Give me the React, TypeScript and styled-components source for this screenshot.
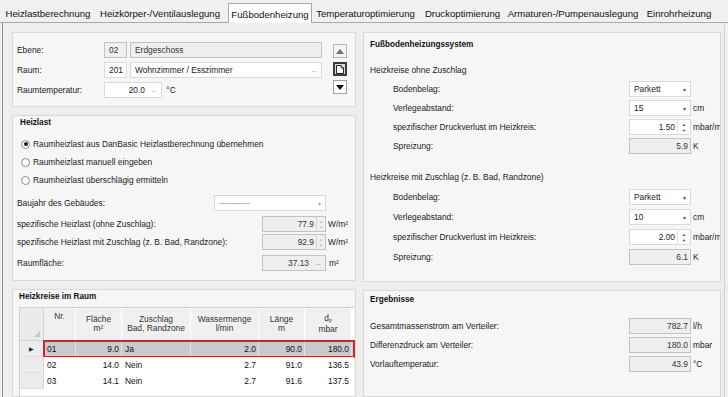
import React from "react";
import styled, { createGlobalStyle, css } from "styled-components";

const GlobalStyle = createGlobalStyle`
  html, body {
    margin: 0;
    padding: 0;
  }
  body {
    width: 728px;
    height: 397px;
    overflow: hidden;
    background: #f0f0f0;
    font-family: "Liberation Sans", Arial, sans-serif;
    font-size: 8.4px;
    color: #1b1b1b;
  }
`;

const Window = styled.div`
  width: 728px;
  height: 397px;
  display: flex;
  flex-direction: column;
  background: #f0f0f0;
`;

const TabStrip = styled.div`
  height: 23px;
  box-sizing: border-box;
  display: flex;
  align-items: flex-end;
  padding-left: 2px;
  border-bottom: 1px solid #a9a9a9;
`;

const Tab = styled.div<{ $w: number; $active?: boolean }>`
  width: ${(p) => p.$w}px;
  height: 18px;
  box-sizing: border-box;
  display: flex;
  align-items: center;
  justify-content: center;
  font-size: 9.6px;
  white-space: nowrap;
  color: #111;
  ${(p) =>
    p.$active &&
    css`
      height: 20px;
      margin: 0 0 -1px 2px;
      padding-top: 1px;
      background: #fff;
      border: 1px solid #a9a9a9;
      border-bottom: none;
    `}
`;

const Content = styled.div`
  flex: 1;
  min-height: 0;
  margin-left: 2px;
  width: 723px;
  box-sizing: border-box;
  border-left: 1px solid #8e8e8e;
  border-right: 1px solid #d2d2d2;
  padding: 9px 3px 0 9px;
  display: flex;
  gap: 7px;
  background: #eeeeee;
`;

const Column = styled.div<{ $w: number }>`
  width: ${(p) => p.$w}px;
  display: flex;
  flex-direction: column;
  gap: 8px;
`;

const Group = styled.div<{ $h?: number }>`
  box-sizing: border-box;
  ${(p) => (p.$h ? `height: ${p.$h}px;` : "flex: 1; min-height: 0;")}
  background: #f6f6f6;
  border: 1px solid #d9d9d9;
  display: flex;
  flex-direction: column;
  overflow: hidden;
`;

const Title = styled.div<{ $indent?: number; $top?: number }>`
  height: 14px;
  line-height: 14px;
  margin: ${(p) => p.$top ?? 0}px 0 0 ${(p) => p.$indent ?? 0}px;
  font-weight: bold;
  font-size: 8.2px;
  color: #111;
`;

const SubTitle = styled.div<{ $top: number }>`
  height: 14px;
  line-height: 14px;
  margin-top: ${(p) => p.$top}px;
`;

const Label = styled.div`
  height: 16px;
  line-height: 16px;
  white-space: nowrap;
`;

/* ---------- fields ---------- */

const Box = styled.div<{ $w?: number; $off?: boolean }>`
  ${(p) => (p.$w ? `width: ${p.$w}px;` : "")}
  height: 16px;
  box-sizing: border-box;
  border: 1px solid ${(p) => (p.$off ? "#c2c2c2" : "#dadada")};
  background: ${(p) => (p.$off ? "#efefef" : "#fff")};
  display: flex;
  align-items: center;
  white-space: nowrap;
  color: ${(p) => (p.$off ? "#333" : "#1b1b1b")};
`;

const BoxText = styled.span<{ $right?: boolean }>`
  flex: 1;
  padding: 0 ${(p) => (p.$right ? "2px" : "3px")} 0 4px;
  text-align: ${(p) => (p.$right ? "right" : "left")};
`;

const Dots = styled.span`
  width: 14px;
  text-align: center;
  color: #999;
  font-size: 8px;
  letter-spacing: -0.5px;
  padding-bottom: 2px;
`;

const Spin = styled.div<{ $w: number; $off?: boolean }>`
  width: ${(p) => p.$w}px;
  align-self: stretch;
  border-left: 1px solid ${(p) => (p.$off ? "#d6d6d6" : "#e2e2e2")};
  display: flex;
  flex-direction: column;
  align-items: center;
  justify-content: center;
  gap: 3px;
  color: ${(p) => (p.$off ? "#bdbdbd" : "#333")};
  font-size: 4px;
  line-height: 3px;
`;

const Arrow = styled.span<{ $off?: boolean }>`
  width: 12px;
  text-align: center;
  font-size: 6px;
  color: ${(p) => (p.$off ? "#aaa" : "#555")};
`;

const Unit = styled.div`
  height: 16px;
  line-height: 16px;
  padding-left: 2px;
  white-space: nowrap;
`;

function TextField({ w, off, right, value, dots }: { w?: number; off?: boolean; right?: boolean; value: string; dots?: boolean }) {
  return (
    <Box $w={w} $off={off}>
      <BoxText $right={right}>{value}</BoxText>
      {dots && <Dots>...</Dots>}
    </Box>
  );
}

function SpinField({ w, off, value, spinW }: { w: number; off?: boolean; value: string; spinW: number }) {
  return (
    <Box $w={w} $off={off}>
      <BoxText $right>{value}</BoxText>
      <Spin $w={spinW} $off={off}>
        <span>▲</span>
        <span>▼</span>
      </Spin>
    </Box>
  );
}

const ComboText = styled(BoxText)<{ $off?: boolean }>`
  color: ${(p) => (p.$off ? "#8a8a8a" : "inherit")};
`;

function Combo({ w, off, value }: { w: number; off?: boolean; value: string }) {
  return (
    <Box $w={w}>
      <ComboText $off={off}>{value}</ComboText>
      <Arrow $off={off}>▾</Arrow>
    </Box>
  );
}

/* ---------- raum group ---------- */

const RaumBody = styled.div`
  display: flex;
  padding: 9px 0 0 4px;
`;

const RaumGrid = styled.div`
  display: grid;
  grid-template-columns: 84px 23px 192px;
  grid-auto-rows: 16px;
  column-gap: 3px;
  row-gap: 4px;
`;

const TempCell = styled.div`
  grid-column: 2 / 4;
  display: flex;
  align-items: center;
`;

const NavColumn = styled.div`
  margin-left: 11px;
  padding-top: 2px;
  display: flex;
  flex-direction: column;
  gap: 4px;
`;

const NavButton = styled.div<{ $kind: "up" | "doc" | "down" }>`
  width: 14px;
  height: 14px;
  box-sizing: border-box;
  display: flex;
  align-items: center;
  justify-content: center;
  ${(p) =>
    p.$kind === "up" &&
    css`
      border: 1px solid #b4b4b4;
      background: #f4f4f4;
    `}
  ${(p) =>
    p.$kind === "doc" &&
    css`
      border: 2px solid #3a3a3a;
      background: #dcdcdc;
    `}
  ${(p) =>
    p.$kind === "down" &&
    css`
      border: 1px solid #a0a0a0;
      background: #fff;
    `}
`;

/* ---------- heizlast group ---------- */

const HeizlastBody = styled.div`
  display: flex;
  flex-direction: column;
  padding: 0 1px 0 4px;
`;

const TableBody = styled(HeizlastBody)`
  flex: 1;
  min-height: 0;
`;

const RadioRow = styled.div<{ $top?: number }>`
  height: 18px;
  display: flex;
  align-items: center;
  margin: ${(p) => p.$top ?? 0}px 0 0 4px;
  gap: 3px;
`;

const RadioDot = styled.span<{ $on?: boolean }>`
  width: 9px;
  height: 9px;
  box-sizing: border-box;
  border-radius: 50%;
  border: 1px solid #8a8a8a;
  background: #fff;
  display: flex;
  align-items: center;
  justify-content: center;
  &::after {
    content: "";
    width: 4px;
    height: 4px;
    border-radius: 50%;
    background: ${(p) => (p.$on ? "#1a1a1a" : "transparent")};
  }
`;

const LastRow = styled.div<{ $top: number }>`
  display: flex;
  align-items: center;
  height: 16px;
  margin-top: ${(p) => p.$top}px;
`;

const Grow = styled.div`
  flex: 1;
`;

const UnitSlot = styled.div<{ $pad?: number }>`
  width: 28px;
  padding-left: ${(p) => p.$pad ?? 0}px;
  box-sizing: border-box;
`;

/* ---------- table ---------- */

const TableWrap = styled.div`
  margin: 3px 0 0 2px;
  width: 334px;
  flex: 1;
  background: #fff;
  border-left: 1px solid #d0d0d0;
  border-top: 1px solid #d0d0d0;
`;

const HeadRow = styled.div`
  display: grid;
  grid-template-columns: 24px 32px 46px 69px 68px 46px 47px;
  height: 33px;
`;

const HeadCell = styled.div<{ $top?: boolean }>`
  box-sizing: border-box;
  background: #f0f0f0;
  border-right: 1px solid #fff;
  border-bottom: 1px solid #d0d0d0;
  display: flex;
  flex-direction: column;
  align-items: center;
  justify-content: ${(p) => (p.$top ? "flex-start" : "center")};
  padding-top: ${(p) => (p.$top ? 4 : 0)}px;
  line-height: 9px;
  text-align: center;
  white-space: nowrap;
  color: #333;
`;

const Sub = styled.sub`
  font-size: 5px;
  vertical-align: -1px;
`;

const Corner = styled.div`
  box-sizing: border-box;
  background: #ebebeb;
  border-right: 1px solid #d6d6d6;
  border-bottom: 1px solid #d0d0d0;
  display: flex;
  align-items: flex-end;
  justify-content: flex-end;
  padding: 0 3px 3px 0;
`;

const DataRow = styled.div`
  display: grid;
  grid-template-columns: 24px 1fr;
  height: 16px;
`;

const RowHead = styled.div`
  box-sizing: border-box;
  background: #ececec;
  border-right: 1px solid #d6d6d6;
  border-bottom: 1px solid #e0e0e0;
  display: flex;
  align-items: center;
  justify-content: center;
  font-size: 6px;
  color: #222;
`;

const Cells = styled.div<{ $sel?: boolean }>`
  display: grid;
  grid-template-columns: 32px 46px 69px 68px 46px 47px;
  background: ${(p) => (p.$sel ? "#cacaca" : "#fff")};
  ${(p) =>
    p.$sel &&
    css`
      outline: 2px solid #c42a31;
      outline-offset: -1px;
    `}
`;

const Cell = styled.div<{ $right?: boolean; $sel?: boolean }>`
  box-sizing: border-box;
  line-height: 16px;
  padding: 0 2px 0 3px;
  text-align: ${(p) => (p.$right ? "right" : "left")};
  border-right: 1px solid ${(p) => (p.$sel ? "#e4e4e4" : "#fff")};
  white-space: nowrap;
  color: #111;
`;

/* ---------- right groups ---------- */

const RightBody = styled.div`
  display: flex;
  flex-direction: column;
  padding: 0 0 0 6px;
`;

const FieldGrid = styled.div<{ $indent: number; $gap: number; $top: number }>`
  display: grid;
  grid-template-columns: ${(p) => 259 - p.$indent}px 62px auto;
  grid-auto-rows: 16px;
  row-gap: ${(p) => p.$gap}px;
  padding-left: ${(p) => p.$indent}px;
  margin-top: ${(p) => p.$top}px;
`;

/* ---------- data ---------- */

const tabs = [
  { label: "Heizlastberechnung", w: 92 },
  { label: "Heizkörper-/Ventilauslegung", w: 132 },
  { label: "Fußbodenheizung", w: 84, active: true },
  { label: "Temperaturoptimierung", w: 107 },
  { label: "Druckoptimierung", w: 87 },
  { label: "Armaturen-/Pumpenauslegung", w: 134 },
  { label: "Einrohrheizung", w: 78 },
];

const rows = [
  { nr: "01", flaeche: "9.0", zuschlag: "Ja", wasser: "2.0", laenge: "90.0", dp: "180.0", sel: true },
  { nr: "02", flaeche: "14.0", zuschlag: "Nein", wasser: "2.7", laenge: "91.0", dp: "136.5" },
  { nr: "03", flaeche: "14.1", zuschlag: "Nein", wasser: "2.7", laenge: "91.6", dp: "137.5" },
];

function KreisBlock({ verlege, druck, spreizung, gap, top }: { verlege: string; druck: string; spreizung: string; gap: number; top: number }) {
  return (
    <FieldGrid $indent={23} $gap={gap} $top={top}>
      <Label>Bodenbelag:</Label>
      <Combo w={62} value="Parkett" />
      <Unit />
      <Label>Verlegeabstand:</Label>
      <Combo w={62} value={verlege} />
      <Unit>cm</Unit>
      <Label>spezifischer Druckverlust im Heizkreis:</Label>
      <SpinField w={62} value={druck} spinW={12} />
      <Unit>mbar/m</Unit>
      <Label>Spreizung:</Label>
      <TextField w={62} off right value={spreizung} />
      <Unit>K</Unit>
    </FieldGrid>
  );
}

export default function App() {
  return (
    <Window>
      <GlobalStyle />
      <TabStrip>
        {tabs.map((t) => (
          <Tab key={t.label} $w={t.w} $active={t.active}>
            {t.label}
          </Tab>
        ))}
      </TabStrip>
      <Content>
        <Column $w={344}>
          <Group $h={75}>
            <RaumBody>
              <RaumGrid>
                <Label>Ebene:</Label>
                <TextField off value="02" />
                <TextField off value="Erdgeschoss" />
                <Label>Raum:</Label>
                <TextField value="201" />
                <TextField value="Wohnzimmer / Esszimmer" dots />
                <Label>Raumtemperatur:</Label>
                <TempCell>
                  <TextField w={58} right value="20.0" dots />
                  <Unit>&nbsp;°C</Unit>
                </TempCell>
              </RaumGrid>
              <NavColumn>
                <NavButton $kind="up">
                  <svg width="8" height="5" viewBox="0 0 8 5">
                    <path d="M0 5 L4 0 L8 5 Z" fill="#707070" />
                  </svg>
                </NavButton>
                <NavButton $kind="doc">
                  <svg width="8" height="9" viewBox="0 0 8 9">
                    <path d="M0.5 0.5 H5 L7.5 3 V8.5 H0.5 Z" fill="#fff" stroke="#222" strokeWidth="1" />
                    <path d="M5 0.5 V3 H7.5" fill="none" stroke="#222" strokeWidth="0.8" />
                  </svg>
                </NavButton>
                <NavButton $kind="down">
                  <svg width="8" height="5" viewBox="0 0 8 5">
                    <path d="M0 0 L8 0 L4 5 Z" fill="#111" />
                  </svg>
                </NavButton>
              </NavColumn>
            </RaumBody>
          </Group>

          <Group $h={166}>
            <HeizlastBody>
              <Title $indent={3}>Heizlast</Title>
              <RadioRow $top={5}>
                <RadioDot $on />
                Raumheizlast aus DanBasic Heizlastberechnung übernehmen
              </RadioRow>
              <RadioRow>
                <RadioDot />
                Raumheizlast manuell eingeben
              </RadioRow>
              <RadioRow>
                <RadioDot />
                Raumheizlast überschlägig ermitteln
              </RadioRow>
              <LastRow $top={6}>
                <Grow>Baujahr des Gebäudes:</Grow>
                <Combo w={112} off value="-----------" />
                <UnitSlot />
              </LastRow>
              <LastRow $top={5}>
                <Grow>spezifische Heizlast (ohne Zuschlag):</Grow>
                <SpinField w={64} off value="77.9" spinW={8} />
                <UnitSlot>
                  <Unit>W/m²</Unit>
                </UnitSlot>
              </LastRow>
              <LastRow $top={2}>
                <Grow>spezifische Heizlast mit Zuschlag (z. B. Bad, Randzone):</Grow>
                <SpinField w={64} off value="92.9" spinW={8} />
                <UnitSlot>
                  <Unit>W/m²</Unit>
                </UnitSlot>
              </LastRow>
              <LastRow $top={5}>
                <Grow>Raumfläche:</Grow>
                <TextField w={64} off right value="37.13" dots />
                <UnitSlot $pad={1}>
                  <Unit>m²</Unit>
                </UnitSlot>
              </LastRow>
            </HeizlastBody>
          </Group>

          <Group>
            <TableBody>
              <Title $indent={2}>Heizkreise im Raum</Title>
              <TableWrap>
                <HeadRow>
                  <Corner>
                    <svg width="6" height="6" viewBox="0 0 6 6">
                      <path d="M6 0 L6 6 L0 6 Z" fill="#c8c8c8" />
                    </svg>
                  </Corner>
                  <HeadCell $top>Nr.</HeadCell>
                  <HeadCell>
                    <span>Fläche</span>
                    <span>m²</span>
                  </HeadCell>
                  <HeadCell>
                    <span>Zuschlag</span>
                    <span>Bad, Randzone</span>
                  </HeadCell>
                  <HeadCell>
                    <span>Wassermenge</span>
                    <span>l/min</span>
                  </HeadCell>
                  <HeadCell>
                    <span>Länge</span>
                    <span>m</span>
                  </HeadCell>
                  <HeadCell>
                    <span>
                      d<Sub>p</Sub>
                    </span>
                    <span>mbar</span>
                  </HeadCell>
                </HeadRow>
                {rows.map((r) => (
                  <DataRow key={r.nr}>
                    <RowHead>{r.sel ? "▶" : ""}</RowHead>
                    <Cells $sel={r.sel}>
                      <Cell $sel={r.sel}>{r.nr}</Cell>
                      <Cell $sel={r.sel} $right>
                        {r.flaeche}
                      </Cell>
                      <Cell $sel={r.sel}>{r.zuschlag}</Cell>
                      <Cell $sel={r.sel} $right>
                        {r.wasser}
                      </Cell>
                      <Cell $sel={r.sel} $right>
                        {r.laenge}
                      </Cell>
                      <Cell $sel={r.sel} $right>
                        {r.dp}
                      </Cell>
                    </Cells>
                  </DataRow>
                ))}
              </TableWrap>
            </TableBody>
          </Group>
        </Column>

        <Column $w={358}>
          <Group $h={250}>
            <RightBody>
              <Title $top={5}>Fußbodenheizungssystem</Title>
              <SubTitle $top={11}>Heizkreise ohne Zuschlag</SubTitle>
              <KreisBlock verlege="15" druck="1.50" spreizung="5.9" gap={3} top={4} />
              <SubTitle $top={16}>Heizkreise mit Zuschlag (z. B. Bad, Randzone)</SubTitle>
              <KreisBlock verlege="10" druck="2.00" spreizung="6.1" gap={4} top={5} />
            </RightBody>
          </Group>
          <Group>
            <RightBody>
              <Title $top={2}>Ergebnisse</Title>
              <FieldGrid $indent={0} $gap={3} $top={11}>
                <Label>Gesamtmassenstrom am Verteiler:</Label>
                <TextField w={62} off right value="782.7" />
                <Unit>l/h</Unit>
                <Label>Differenzdruck am Verteiler:</Label>
                <TextField w={62} off right value="180.0" />
                <Unit>mbar</Unit>
                <Label>Vorlauftemperatur:</Label>
                <TextField w={62} off right value="43.9" />
                <Unit>°C</Unit>
              </FieldGrid>
            </RightBody>
          </Group>
        </Column>
      </Content>
    </Window>
  );
}
